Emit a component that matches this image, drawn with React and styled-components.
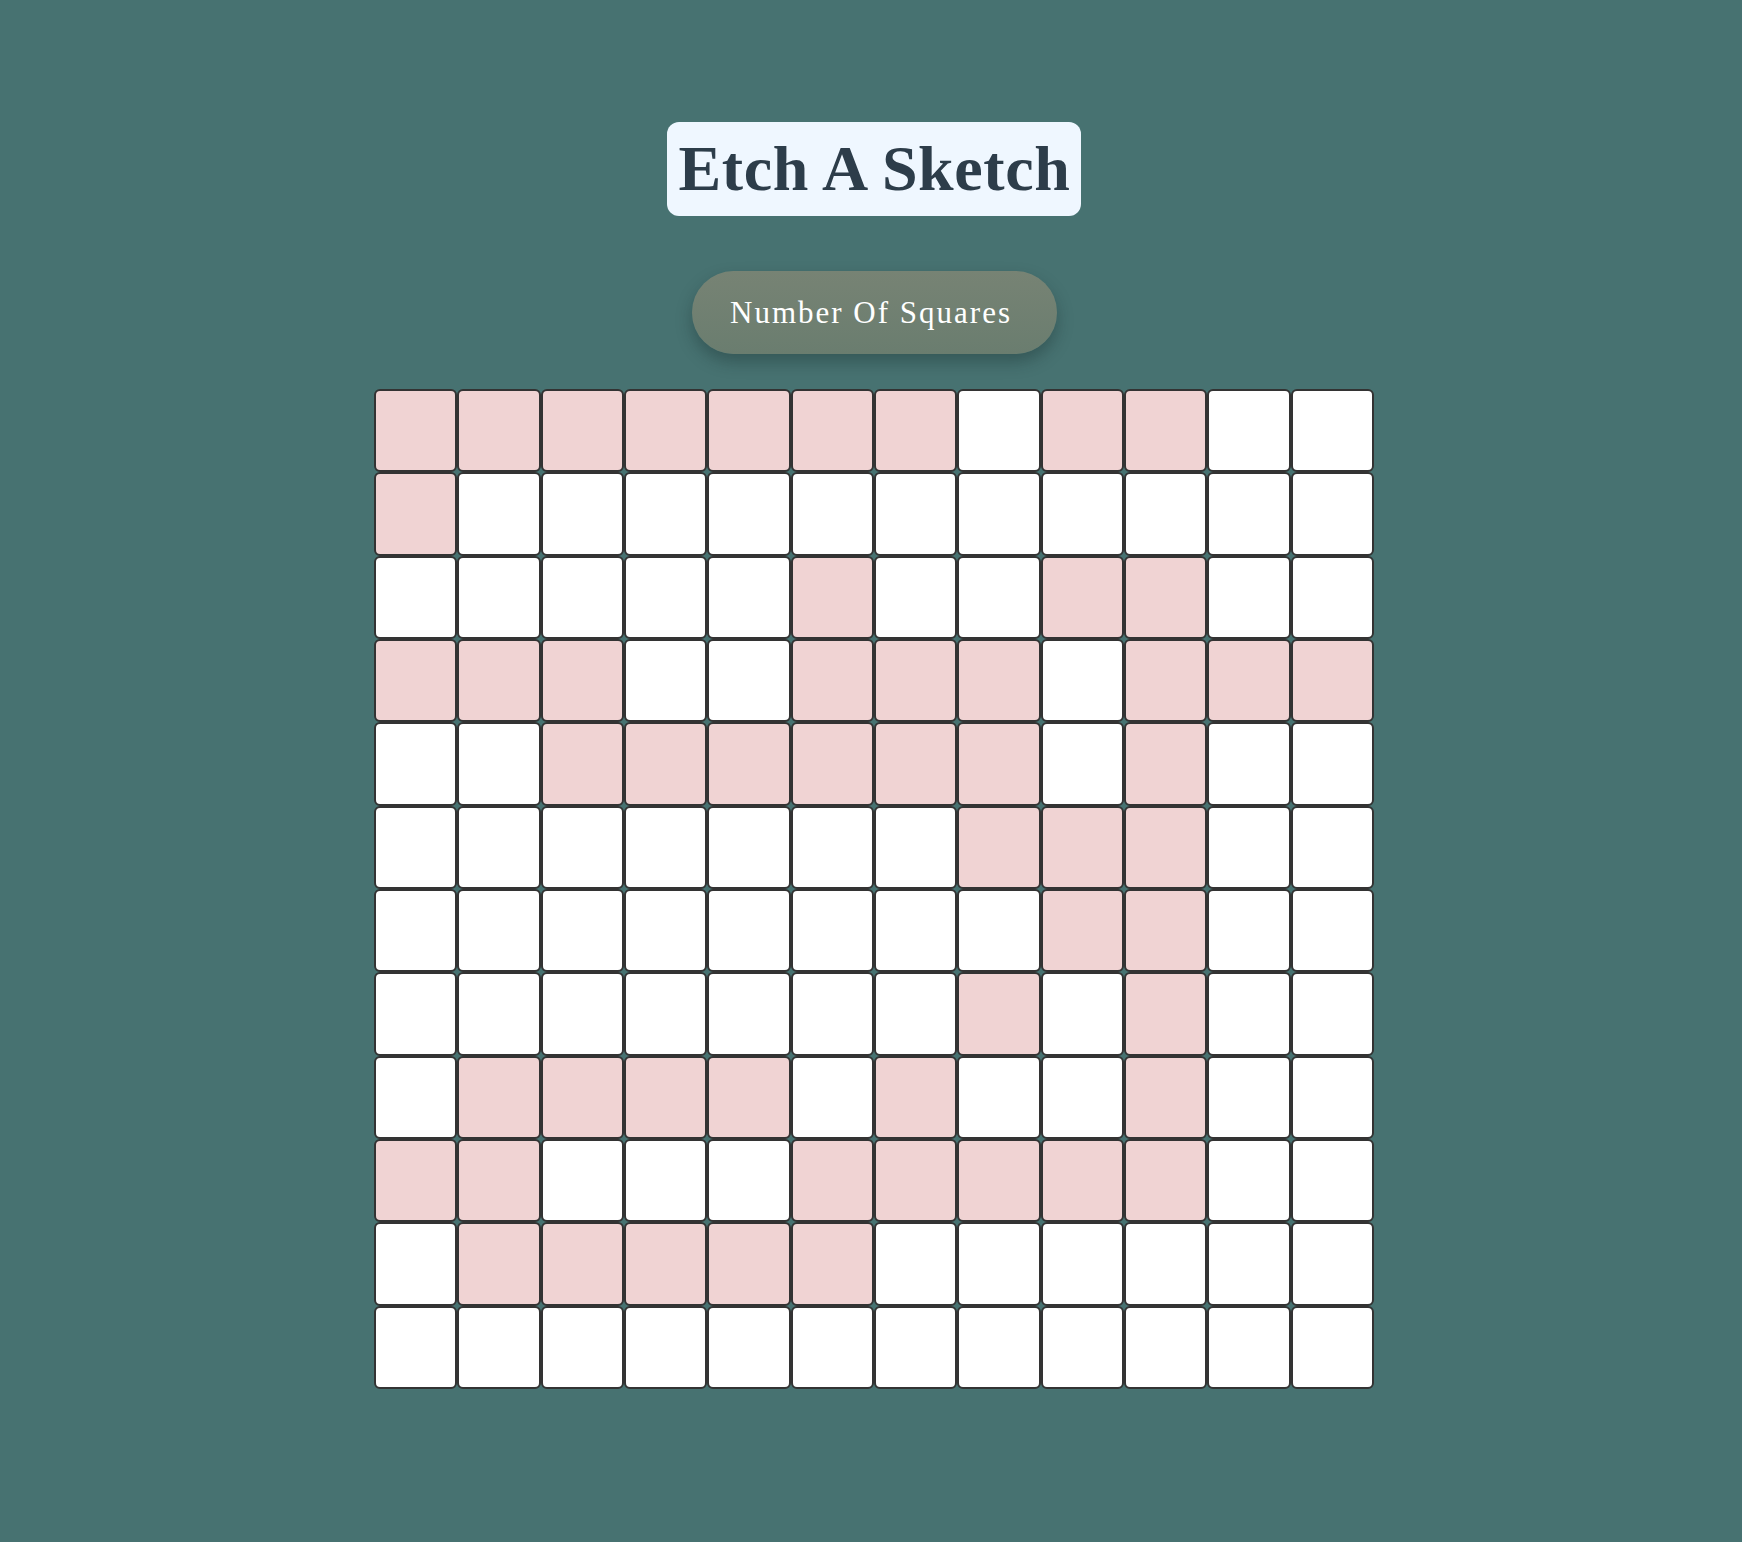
import React from 'react'
import styled, { createGlobalStyle } from 'styled-components'

const GlobalStyle = createGlobalStyle`
  html, body {
    margin: 0;
    padding: 0;
    background: #477271;
    font-family: "Liberation Serif", "Times New Roman", serif;
  }
`

// 1 = coloured square
const pattern = [
  '111111101100',
  '100000000000',
  '000001001100',
  '111001110111',
  '001111110100',
  '000000011100',
  '000000001100',
  '000000010100',
  '011110100100',
  '110001111100',
  '011111000000',
  '000000000000',
]

const App = () => {
  return (
    <>
      <GlobalStyle />
      <Page>
        <Title>Etch A Sketch</Title>
        <SizeButton>Number Of Squares</SizeButton>
        <Board>
          {pattern.map((row, r) =>
            row.split('').map((v, c) => (
              <Square key={`${r}-${c}`} $filled={v === '1'} />
            ))
          )}
        </Board>
      </Page>
    </>
  )
}

const Page = styled.div`
  display: flex;
  flex-direction: column;
  align-items: center;
  padding: 122px 0 154px 6px;
`

const Title = styled.h1`
  margin: 0;
  padding: 0 11px 0 12px;
  height: 94px;
  display: flex;
  align-items: center;
  background: #eff7ff;
  color: #2d3d4a;
  font-size: 64px;
  font-weight: bold;
  letter-spacing: 0.6px;
  border-radius: 12px;
  box-sizing: border-box;
`

const SizeButton = styled.button`
  margin-top: 55px;
  width: 365px;
  height: 83px;
  padding: 0 6px 0 0;
  border: none;
  border-radius: 42px;
  background: linear-gradient(#778374, #6a7d6f);
  color: #ffffff;
  font-family: "Liberation Serif", "Times New Roman", serif;
  font-size: 31px;
  letter-spacing: 2px;
  box-shadow: 0 8px 16px rgba(20, 40, 40, 0.35);
  cursor: pointer;
`

const Board = styled.div`
  margin-top: 35px;
  width: 1000px;
  height: 1000px;
  display: grid;
  grid-template-columns: repeat(12, 1fr);
  grid-template-rows: repeat(12, 1fr);
`

const Square = styled.div`
  box-sizing: border-box;
  border: 2px solid #333333;
  border-radius: 6px;
  background: ${(p) => (p.$filled ? '#f0d3d3' : '#ffffff')};
`

export default App
